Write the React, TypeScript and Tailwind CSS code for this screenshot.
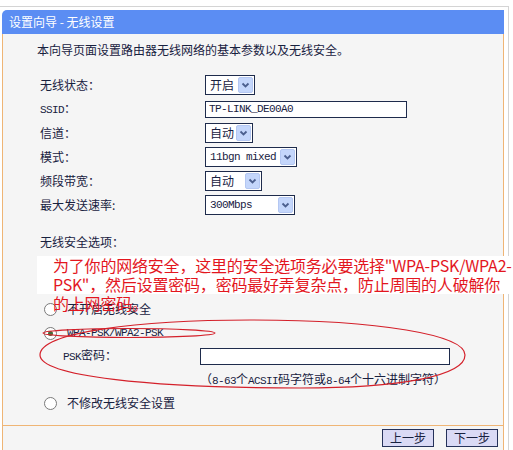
const mono = "font-['Liberation_Mono','Noto_Sans_CJK_SC',monospace] text-[11px] tracking-[-0.6px]";

function Arrow() {
  return (
    <span className="flex h-[16px] w-[15px] items-center justify-center rounded-[2px] border border-[#b4c7f2] bg-[#c4d6fb]">
      <svg width="9" height="8" viewBox="0 0 9 8">
        <path d="M1.5 2.5 L4.5 5.5 L7.5 2.5" fill="none" stroke="#4b5f8e" strokeWidth="1.8" />
      </svg>
    </span>
  );
}

function Select({ value, className, isMono }: { value: string; className: string; isMono?: boolean }) {
  return (
    <div className={"flex h-[20px] items-center justify-between border border-[#1e2b4c] bg-white pl-[4px] pr-[1px] " + className}>
      <span className={isMono ? mono : ""}>{value}</span>
      <Arrow />
    </div>
  );
}

function Row({ label, children }: { label: React.ReactNode; children: React.ReactNode }) {
  return (
    <div className="flex h-[24px] items-center pl-[37px]">
      <div className="w-[165px]">{label}</div>
      {children}
    </div>
  );
}

function Radio({ checked }: { checked?: boolean }) {
  return (
    <span className="flex h-[13px] w-[13px] items-center justify-center rounded-full border border-[#7a7a7a] bg-white">
      {checked && <span className="h-[5px] w-[5px] rounded-full bg-[#4a6a3a]" />}
    </span>
  );
}

export default function App() {
  return (
    <div className="relative h-[450px] w-[513px] overflow-hidden bg-white font-['Noto_Sans_CJK_SC',sans-serif] text-[12px] leading-[16px] text-[#18213f]">
      <div className="mt-[6px] h-[444px] w-[509px] border-t border-r border-[#d4d4d4] pl-[2px] pt-[3px]">
        <div className="flex h-full w-[502px] flex-col">
          <div className="flex h-[24px] shrink-0 items-center rounded-tl-[5px] bg-[#5b8df3] pl-[7px] text-white">
            设置向导 - 无线设置
          </div>
          <div className="flex-1 border-x border-[#efb575] bg-[#f5f5f5]">
            <p className="pl-[34px] pt-[8px]">本向导页面设置路由器无线网络的基本参数以及无线安全。</p>

            <div className="mt-[15px]">
              <Row label="无线状态：">
                <Select value="开启" className="w-[50px]" />
              </Row>
              <Row label={<><span className={mono}>SSID</span>：</>}>
                <div className={"flex h-[17px] w-[202px] items-center border border-[#1e2b4c] bg-white pl-[3px] " + mono}>
                  TP-LINK_DE00A0
                </div>
              </Row>
              <Row label="信道：">
                <Select value="自动" className="w-[48px]" />
              </Row>
              <Row label="模式：">
                <Select value="11bgn mixed" className="w-[92px]" isMono />
              </Row>
              <Row label="频段带宽：">
                <Select value="自动" className="w-[57px]" />
              </Row>
              <Row label="最大发送速率:">
                <Select value="300Mbps" className="w-[90px]" isMono />
              </Row>
            </div>

            <p className="mt-[17px] pl-[37px]">无线安全选项：</p>

            <div className="mt-[47px]">
              <div className="flex h-[24px] items-center gap-[10px] pl-[41px]">
                <Radio />
                <span>不开启无线安全</span>
              </div>
              <div className="flex h-[24px] items-center gap-[10px] pl-[41px]">
                <Radio checked />
                <span className={mono}>WPA-PSK/WPA2-PSK</span>
              </div>
              <div className="flex h-[22px] items-center pl-[60px]">
                <div className="w-[137px]">
                  <span className={mono}>PSK</span>密码：
                </div>
                <div className="h-[17px] w-[250px] border border-[#1e2b4c] bg-white" />
              </div>
              <div className="mt-[4px] h-[16px] pl-[197px]">
                （<span className={mono}>8-63</span>个<span className={mono}>ACSII</span>码字符或
                <span className={mono}>8-64</span>个十六进制字符）
              </div>
              <div className="mt-[4px] flex h-[24px] items-center gap-[10px] pl-[41px]">
                <Radio />
                <span>不修改无线安全设置</span>
              </div>
            </div>

            <div className="mt-[10px] flex justify-end gap-[12px] border-t border-[#efb575] pr-[5px] pt-[3px]">
              <button className="h-[18px] w-[52px] border border-[#26325a] bg-[#dadaf5] leading-[16px] text-[#18213f]">
                上一步
              </button>
              <button className="h-[18px] w-[52px] border border-[#26325a] bg-[#dadaf5] leading-[16px] text-[#18213f]">
                下一步
              </button>
            </div>
          </div>
        </div>
      </div>

      {/* red annotation pasted over the page */}
      <div className="absolute left-[37px] top-[256px] w-[476px] whitespace-nowrap text-[16px] leading-[19px] tracking-[-0.2px] text-[#e3161e]">
        <div className="bg-white pl-[16px]">
          <div>为了你的网络安全，这里的安全选项务必要选择"WPA-PSK/WPA2-</div>
          <div>PSK"，然后设置密码，密码最好弄复杂点，防止周围的人破解你</div>
        </div>
        <div className="pl-[16px]">的上网密码。</div>
      </div>

      <svg className="pointer-events-none absolute left-0 top-0" width="513" height="450" viewBox="0 0 513 450">
        <path
          d="M40 355 C40 332 140 320 250 320 C380 320 465 335 465 355 C465 376 400 388 300 388 C150 388 40 376 40 355 Z"
          fill="none"
          stroke="#d4202a"
          strokeWidth="1.2"
        />
        <ellipse cx="129" cy="333" rx="86" ry="4.5" fill="none" stroke="#d4202a" strokeWidth="1.2" />
      </svg>
    </div>
  );
}
